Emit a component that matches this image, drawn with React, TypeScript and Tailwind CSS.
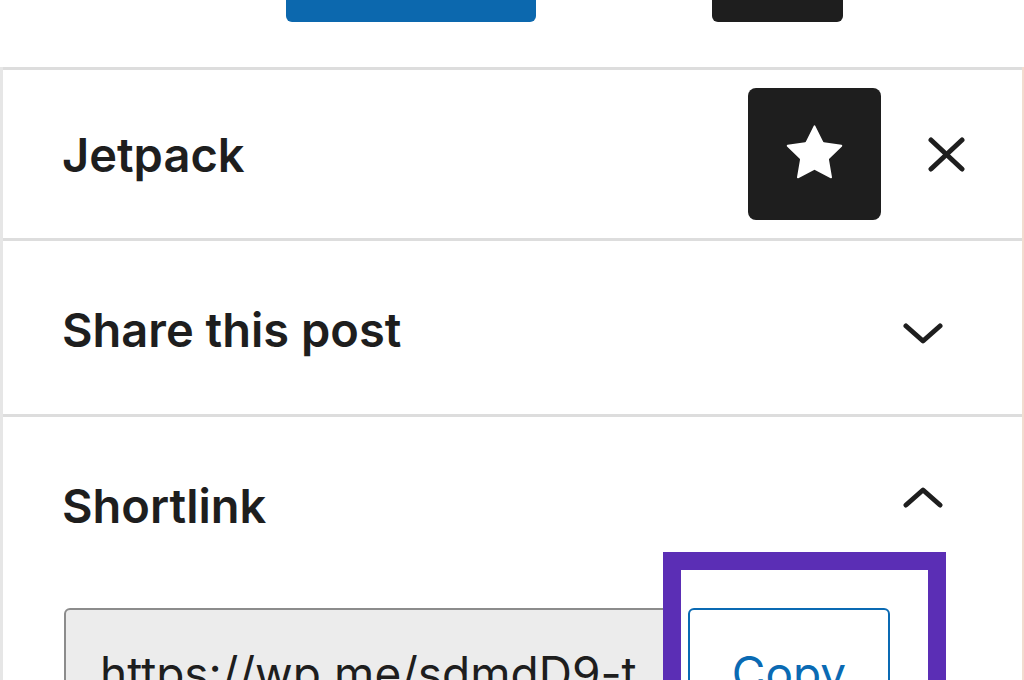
import React from 'react';

const StarIcon = () => (
  <svg width="91" height="91" viewBox="0 0 24 24" fill="#ffffff">
    <path d="M11.776 4.454a.25.25 0 01.448 0l2.069 4.192a.25.25 0 00.188.137l4.626.672a.25.25 0 01.139.426l-3.348 3.263a.25.25 0 00-.072.222l.79 4.607a.25.25 0 01-.362.263l-4.138-2.175a.25.25 0 00-.232 0l-4.138 2.175a.25.25 0 01-.363-.263l.79-4.607a.25.25 0 00-.071-.222L4.754 9.881a.25.25 0 01.139-.426l4.626-.672a.25.25 0 00.188-.137l2.069-4.192z" />
  </svg>
);

const CloseIcon = () => (
  <svg width="37" height="35" viewBox="0 0 37 35" fill="none" stroke="#1e1e1e" strokeWidth="5" strokeLinecap="round">
    <line x1="3" y1="3" x2="34" y2="32" />
    <line x1="34" y1="3" x2="3" y2="32" />
  </svg>
);

const Chevron = ({ up = false }: { up?: boolean }) => (
  <svg width="40" height="22" viewBox="0 0 40 22" fill="none" stroke="#1e1e1e" strokeWidth="5" strokeLinecap="round" strokeLinejoin="round">
    {up ? <polyline points="3,19 20,4 37,19" /> : <polyline points="3,3 20,18 37,3" />}
  </svg>
);

const PanelRow = ({ title, open }: { title: string; open: boolean }) => (
  <div className="flex items-center h-[173px] pl-[62px] pr-[79px]">
    <span className="text-[47px] leading-none font-semibold text-[#1e1e1e] mt-[3px]">{title}</span>
    <span className={`ml-auto flex ${open ? 'mb-[14px]' : 'mt-[12px]'}`}>
      <Chevron up={open} />
    </span>
  </div>
);

export default function App() {
  return (
    <div className="relative w-[1024px] h-[680px] overflow-hidden bg-white font-['Inter','Liberation_Sans',sans-serif]">
      {/* top toolbar, clipped */}
      <div className="flex items-start h-[67px] pl-[286px]">
        <div className="w-[250px] h-[22px] rounded-b-[6px] bg-[#0c68ae]" />
        <div className="ml-[176px] w-[131px] h-[22px] rounded-b-[6px] bg-[#1e1e1e]" />
      </div>

      <div className="border-l-[3px] border-r-[2px] border-l-[#e6e6e6] border-r-[#f2dccf] h-full">
        <div className="border-t-[3px] border-[#dddddd]" />

        {/* sidebar header */}
        <div className="flex items-center h-[168px] pl-[59px] pr-[57px]">
          <span className="text-[47px] leading-none font-semibold text-[#1e1e1e]">Jetpack</span>
          <button className="ml-auto w-[133px] h-[132px] rounded-[8px] bg-[#1e1e1e] flex items-center justify-center">
            <StarIcon />
          </button>
          <span className="ml-[47px] flex">
            <CloseIcon />
          </span>
        </div>

        <div className="border-t-[3px] border-[#dddddd]" />
        <div className="-ml-[3px]">
          <PanelRow title="Share this post" open={false} />
        </div>
        <div className="border-t-[3px] border-[#dddddd]" />

        <div className="-ml-[3px]">
          <PanelRow title="Shortlink" open={true} />
          <div className="flex items-start pl-[64px] mt-[18px]">
            <div className="w-[612px] h-[120px] rounded-[6px] border-[2px] border-[#8c8c8c] bg-[#ececec] pl-[34px] pt-[40px]">
              <span className="block text-[46px] leading-[46px] text-[#1e1e1e] whitespace-nowrap overflow-hidden">
                https://wp.me/sdmdD9-t
              </span>
            </div>
            <button className="ml-[12px] w-[202px] h-[120px] rounded-[6px] border-[2.5px] border-[#0a6ab3] bg-white pt-[40px] flex justify-center items-start">
              <span className="text-[46px] leading-[46px] text-[#0a6ab3]">Copy</span>
            </button>
          </div>
        </div>
      </div>

      {/* annotation highlight */}
      <div className="absolute left-[663px] top-[552px] w-[283px] h-[180px] border-[18px] border-[#5b2eb5]" />
    </div>
  );
}
